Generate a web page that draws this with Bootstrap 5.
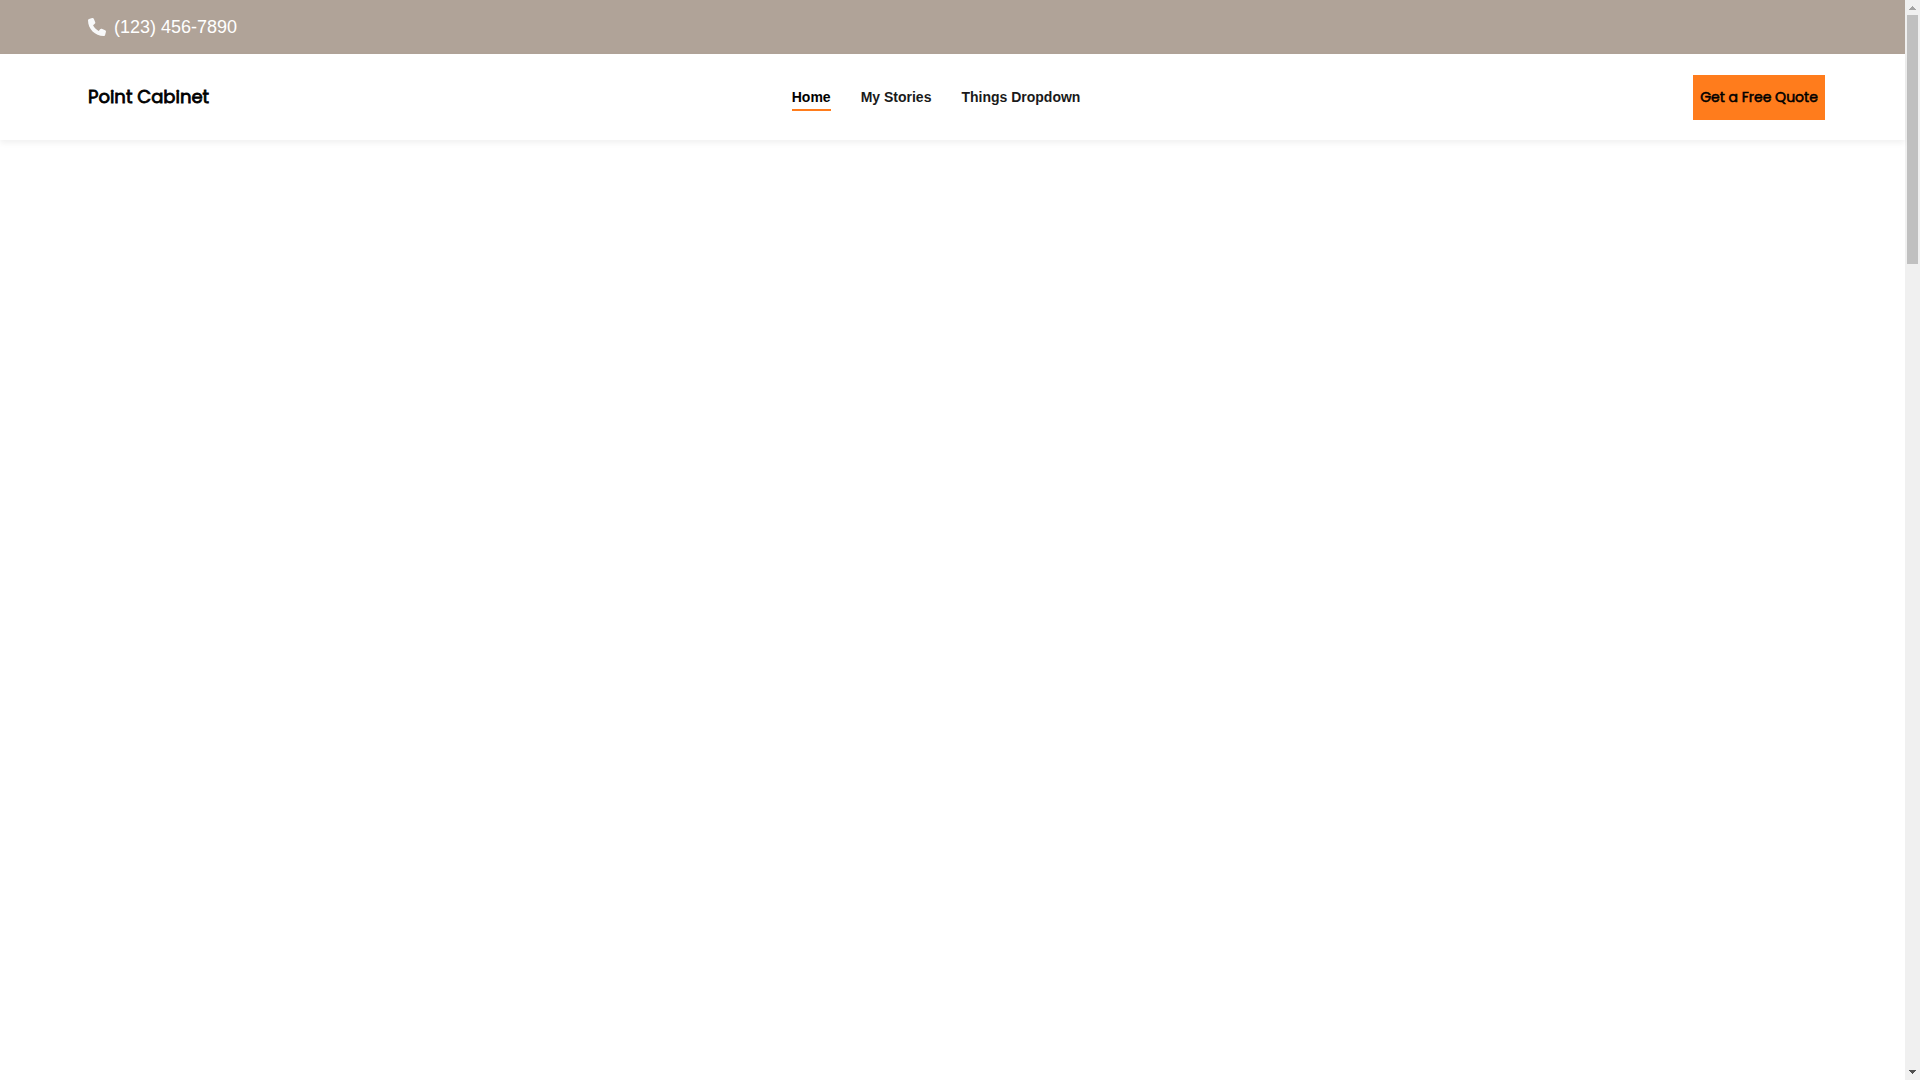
<!DOCTYPE html>
<html lang="en">
<head>
<meta charset="utf-8">
<meta name="viewport" content="width=device-width, initial-scale=1">
<title>Point Cabinet</title>
<link href="https://cdn.jsdelivr.net/npm/bootstrap@5.3.0/dist/css/bootstrap.min.css" rel="stylesheet">
<style>
  body { font-family: "Liberation Sans", Arial, sans-serif; background: #fff; }
  .topbar { background: #b0a398; padding: 14px 80px 13px 88px; }
  .phone-link { color: #fff; font-size: 18px; line-height: 27px; gap: 8px; }
  .phone-link svg { margin-bottom: 1px; }
  .site-header { padding: 21px 80px 20px 88px; box-shadow: 0 3px 6px rgba(0, 0, 0, .06); }
  .site-brand { font-family: Poppins, Inter, sans-serif; font-size: 18px; font-weight: 400; -webkit-text-stroke: .045em #000; line-height: 27px; padding-bottom: 2px; color: #000; }
  .main-nav { gap: 30px; padding-bottom: 1px; }
  .main-nav .nav-item .nav-link { padding: 2px 0 0; font-size: 14px; font-weight: 700; line-height: 24px; color: #1a1a1a; border-bottom: 2px solid transparent; }
  .main-nav .nav-item .nav-link.active { color: #000; border-color: #ff7c1c; }
  .quote-btn { font-family: Poppins, Inter, sans-serif; font-size: 14px; font-weight: 400; -webkit-text-stroke: .04em #000; line-height: 21px; padding: 12px 7px; margin-left: 30px; min-width: 132px; color: #000; background: #ff7c1c; border: 0; border-radius: 0; white-space: nowrap; }
  .scroll-track { width: 15px; background: #f0f0f0; }
  .scroll-arrow { height: 15px; }
  .scroll-thumb { width: 11px; height: 23.1%; background: #c0c0c0; }
</style>
<script src="https://cdn.jsdelivr.net/npm/bootstrap@5.3.0/dist/js/bootstrap.bundle.min.js" defer></script>
</head>
<body>
<div class="d-flex vh-100">
  <div class="flex-grow-1">
    <div class="topbar d-flex">
      <a class="phone-link d-inline-flex align-items-center text-decoration-none" href="tel:1234567890">
        <svg width="18" height="18" viewBox="0 0 512 512" fill="#f8f9fa" aria-hidden="true"><path d="M164.900 24.600c-7.700-18.600-28-28.500-47.400-23.200l-88 24C12.100 30.200 0 46 0 64c0 247.400 200.600 448 448 448 18 0 33.800-12.100 38.600-29.500l24-88c5.300-19.400-4.600-39.700-23.200-47.400l-96-40c-16.300-6.800-35.200-2.100-46.300 11.600L304.700 368C234.300 334.700 177.300 277.700 144 207.300L193.300 167c13.700-11.200 18.400-30 11.600-46.300l-40-96z"/></svg>
        <span>(123) 456-7890</span>
      </a>
    </div>
    <header class="site-header navbar navbar-expand flex-nowrap">
      <a class="site-brand text-decoration-none" href="#">Point Cabinet</a>
      <nav class="mx-auto" aria-label="Main">
        <ul class="main-nav navbar-nav">
          <li class="nav-item"><a class="nav-link active" aria-current="page" href="#">Home</a></li>
          <li class="nav-item"><a class="nav-link" href="#">My Stories</a></li>
          <li class="nav-item"><a class="nav-link" href="#">Things Dropdown</a></li>
        </ul>
      </nav>
      <button class="quote-btn btn" type="button">Get a Free Quote</button>
    </header>
    <main></main>
  </div>
  <div class="scroll-track d-flex flex-column align-items-center flex-shrink-0" aria-hidden="true">
    <svg class="scroll-arrow flex-shrink-0" width="15" height="15" viewBox="0 0 15 15" shape-rendering="crispEdges" fill="#a3a3a3"><path d="M7 6h1v1h1v1h1v1h1v1H4V9h1V8h1V7h1z"/></svg>
    <div class="scroll-thumb"></div>
    <svg class="scroll-arrow flex-shrink-0 mt-auto" width="15" height="15" viewBox="0 0 15 15" shape-rendering="crispEdges" fill="#505050"><path d="M4 5h7v1h-1v1H9v1H8v1H7V8H6V7H5V6H4z"/></svg>
  </div>
</div>
</body>
</html>
